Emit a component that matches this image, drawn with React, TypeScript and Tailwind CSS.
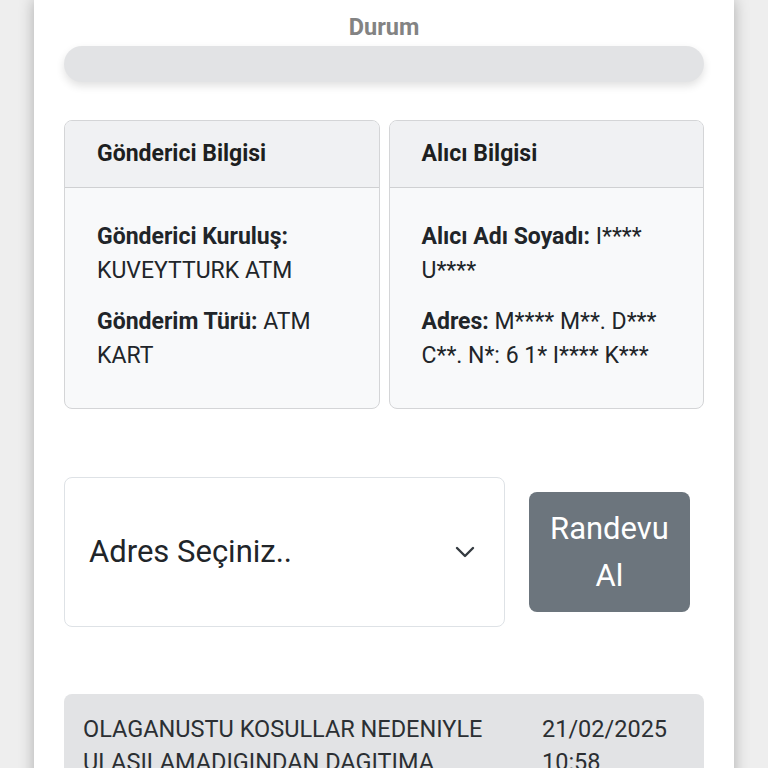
export default function App() {
  const font = { fontFamily: 'Roboto, "Noto Sans", Arial, sans-serif' };

  return (
    <div className="min-h-screen bg-[#eeeeee]" style={font}>
      <div className="mx-[34px] min-h-screen bg-white shadow-[0_0_14px_rgba(0,0,0,0.28)] px-[30px] pt-[11px]">
        <div className="text-center text-[23.5px] font-bold leading-[32px] text-[#838383]">Durum</div>
        <div className="mt-[3px] h-[36px] rounded-full bg-[#e2e3e5] shadow-[0_4px_8px_rgba(0,0,0,0.12)]" />

        <div className="mt-[38px] flex gap-[9px]">
          <div className="flex-1 overflow-hidden rounded-lg border border-[#d4d5d7] bg-[#f8f9fa]">
            <div className="flex h-[67px] items-center border-b border-[#cfd0d2] bg-[#f0f1f3] px-[32px] text-[23px] font-bold text-[#1d1f21]">
              Gönderici Bilgisi
            </div>
            <div className="px-[32px] pt-[32px] pb-[35px] text-[23px] leading-[34px] text-[#212529]">
              <p>
                <span className="font-bold">Gönderici Kuruluş:</span> KUVEYTTURK ATM
              </p>
              <p className="mt-[17px]">
                <span className="font-bold">Gönderim Türü:</span> ATM KART
              </p>
            </div>
          </div>
          <div className="flex-1 overflow-hidden rounded-lg border border-[#d4d5d7] bg-[#f8f9fa]">
            <div className="flex h-[67px] items-center border-b border-[#cfd0d2] bg-[#f0f1f3] px-[32px] text-[23px] font-bold text-[#1d1f21]">
              Alıcı Bilgisi
            </div>
            <div className="px-[32px] pt-[32px] pb-[35px] text-[23px] leading-[34px] text-[#212529]">
              <p>
                <span className="font-bold">Alıcı Adı Soyadı:</span> I**** U****
              </p>
              <p className="mt-[17px]">
                <span className="font-bold">Adres:</span> M**** M**. D*** C**. N*: 6 1* I**** K***
              </p>
            </div>
          </div>
        </div>

        <div className="mt-[68px] flex items-center">
          <div className="flex h-[150px] w-[441px] items-center justify-between rounded-lg border border-[#dee2e6] bg-white pl-[24px] pr-[29px]">
            <span className="text-[31px] text-[#212529]">Adres Seçiniz..</span>
            <svg width="20" height="12" viewBox="0 0 20 12" fill="none">
              <polyline points="2,2 10,10 18,2" stroke="#343a40" strokeWidth="2.4" strokeLinecap="round" strokeLinejoin="round" />
            </svg>
          </div>
          <button className="ml-[24px] h-[120px] w-[161px] rounded-lg bg-[#6c757d] px-[20px] text-[31px] leading-[47px] text-white">
            Randevu Al
          </button>
        </div>

        <div className="mt-[67px] rounded-t-lg bg-[#e2e3e5] px-[19px] pt-[19px] pb-[20px]">
          <div className="grid grid-cols-[440px_1fr] gap-x-[19px] text-[23.5px] leading-[33px] text-[#2b2f33]">
            <div>OLAGANUSTU KOSULLAR NEDENIYLE ULASILAMADIGINDAN DAGITIMA CIKARILAMADI</div>
            <div>21/02/2025 10:58</div>
          </div>
        </div>
      </div>
    </div>
  );
}
